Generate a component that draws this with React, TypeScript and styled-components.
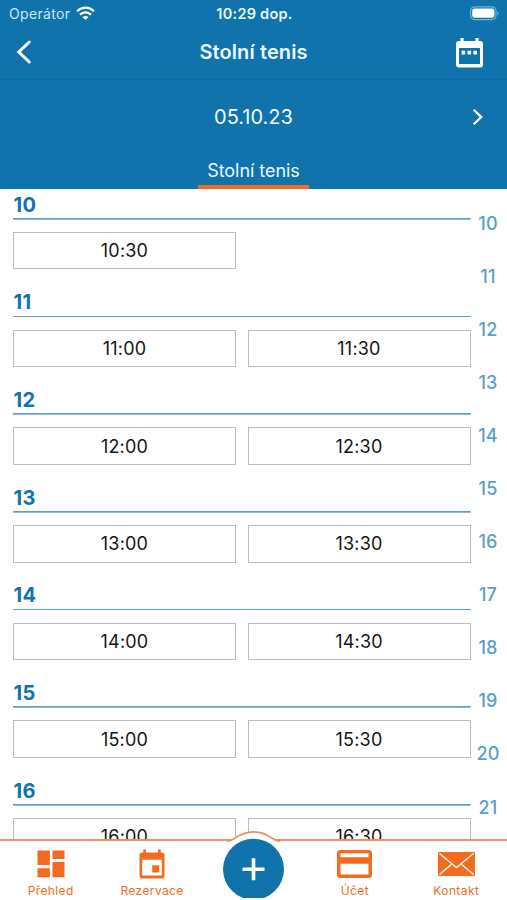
import React from "react";
import styled, { createGlobalStyle } from "styled-components";

const BLUE = "#1173ab";
const ORANGE = "#f36b21";

const GlobalStyle = createGlobalStyle`
  * { box-sizing: border-box; }
  body { margin: 0; background: #fff; font-family: Inter, "Liberation Sans", sans-serif; }
  button { font: inherit; color: inherit; background: none; border: 0; padding: 0; }
  svg { display: block; }
`;

const Screen = styled.div`
  width: 507px;
  height: 900px;
  display: flex;
  flex-direction: column;
  overflow: hidden;
  background: #fff;
`;

const Header = styled.header`
  flex: none;
  height: 189px;
  background: ${BLUE};
  color: #e9faff;
`;

const StatusBar = styled.div`
  height: 27px;
  display: grid;
  grid-template-columns: 1fr auto 1fr;
  align-items: center;
  padding: 0 7px 0 9px;
  font-size: 14px;
`;

const Carrier = styled.div`
  display: flex;
  align-items: center;
  gap: 6px;
  letter-spacing: 0.35px;
  color: #c8e8f8;
`;

const Clock = styled.div`
  font-weight: 600;
  font-size: 14.5px;
  letter-spacing: 0.25px;
`;

const BatterySlot = styled.div`
  display: flex;
  justify-content: flex-end;
`;

const TitleBar = styled.div`
  height: 53px;
  display: grid;
  grid-template-columns: 60px 1fr 60px;
  align-items: center;
  padding-bottom: 2px;
  border-bottom: 1px solid #0d6a9f;
`;

const Title = styled.h1`
  margin: 0;
  text-align: center;
  font-size: 20px;
  line-height: 26px;
  font-weight: 600;
  letter-spacing: 0.1px;
`;

const IconButton = styled.button<{ $inset: number }>`
  width: 60px;
  padding-left: ${(p) => p.$inset}px;
`;

const DateBar = styled.div`
  height: 73px;
  display: grid;
  grid-template-columns: 60px 1fr 60px;
  align-items: center;
  text-align: center;
  font-size: 20px;
`;

const DateText = styled.span`
  grid-column: 2;
  letter-spacing: 0;
`;

const Tabs = styled.nav`
  height: 36px;
  display: flex;
  justify-content: center;
`;

const Tab = styled.button`
  width: 111px;
  padding-top: 3px;
  border-bottom: 4px solid ${ORANGE};
  font-size: 18px;
  letter-spacing: -0.05px;
`;

const Content = styled.main`
  flex: none;
  height: 650px;
  display: flex;
  overflow: hidden;
`;

const Slots = styled.div`
  width: 457.5px;
  margin-left: 13px;
`;

const Section = styled.section`
  height: 97.7px;
`;

const Hour = styled.h2`
  margin: 0;
  height: 30.7px;
  padding-top: 2.5px;
  padding-left: 0.5px;
  background: linear-gradient(#5b9fcc, #5b9fcc) bottom / 100% 1.7px no-repeat;
  color: ${BLUE};
  font-size: 20px;
  line-height: 26px;
  font-weight: 700;
  letter-spacing: 0.3px;
`;

const SlotGrid = styled.div`
  display: grid;
  grid-template-columns: 223px 223px;
  justify-content: space-between;
  padding-top: 12.3px;
`;

const Slot = styled.button`
  height: 37.5px;
  border: 1px solid #bdbdbd;
  color: #151515;
  font-size: 18px;
  letter-spacing: 0.2px;
`;

const HourIndex = styled.aside`
  width: 36px;
  padding-top: 8px;
`;

const IndexItem = styled.div`
  height: 53.05px;
  line-height: 54px;
  text-align: center;
  padding-right: 1px;
  font-size: 18px;
  font-weight: 500;
  letter-spacing: 0.2px;
  color: #5a9fca;
`;

const BottomNav = styled.nav`
  position: relative;
  flex: none;
  height: 61px;
  display: grid;
  grid-template-columns: repeat(5, 101.4px);
  border-top: 2px solid #ee8c62;
  background: #fff;
`;

const NavItem = styled.button`
  display: flex;
  flex-direction: column;
  align-items: center;
  color: ${ORANGE};
  font-size: 12px;
  line-height: 16px;
  letter-spacing: 0.4px;
`;

const NavIcon = styled.span`
  height: 42px;
  display: flex;
  align-items: center;
  padding-top: 3px;
`;

const AddButton = styled.button`
  position: absolute;
  left: 213px;
  top: -12px;
  width: 81px;
  height: 69px;
  overflow: hidden;
`;

const sections = [
  { hour: "10", slots: ["10:30"] },
  ...["11", "12", "13", "14", "15", "16"].map((hour) => ({
    hour,
    slots: [`${hour}:00`, `${hour}:30`],
  })),
];

const hours = Array.from({ length: 12 }, (_, i) => 10 + i);

const WifiIcon = () => (
  <svg width="19" height="15" viewBox="0 0 19 15" fill="none" stroke="#fff" strokeWidth="2.3">
    <path d="M1.1 5.2C6 .4 13 .4 17.9 5.2M4 8.6c3.2-3 7.8-3 11 0" />
    <path d="M6.5 11.3c1.8-1.7 4.2-1.7 6 0L9.5 14z" fill="#fff" stroke="none" />
  </svg>
);

const BatteryIcon = () => (
  <svg width="31" height="15" viewBox="0 0 31 15">
    <rect x="1.6" y=".8" width="25.4" height="12.8" rx="4" fill="none" stroke="#75afd2" strokeWidth="1.2" />
    <rect x="3.2" y="2.6" width="22.2" height="9.2" rx="2.4" fill="#fff" />
    <path d="M28.3 5v4.6q3-2.3 0-4.6" fill="#75afd2" />
  </svg>
);

const BackIcon = () => (
  <svg width="16" height="26" viewBox="0 0 16 26" fill="none" stroke="#fff" strokeWidth="3" strokeLinecap="round">
    <path d="M13.3 3 2.8 13l10.5 10" />
  </svg>
);

const NextIcon = () => (
  <svg width="12" height="18" viewBox="0 0 12 18" fill="none" stroke="#fff" strokeWidth="2.3">
    <path d="m1.7 1.7 7.5 7.3-7.5 7.3" />
  </svg>
);

const DateIcon = () => (
  <svg width="27" height="31" viewBox="0 0 27 31" fill="#fff">
    <path fillRule="evenodd" d="M4.4 1h3.2v3h11.8V1h3.2v3h1.4q3 0 3 3v20.5q0 3-3 3H3q-3 0-3-3V7q0-3 3-3h1.4zM3 11v16h21V11z" />
    <path d="M5.6 13.8h3.6v3.6H5.6zM11.5 13.8h3.6v3.6h-3.6zM17.4 13.8H21v3.6h-3.6z" />
  </svg>
);

const OverviewIcon = () => (
  <svg width="28" height="28" viewBox="0 0 28 28" fill="currentColor">
    <path d="M.5.5h12.4v14.6H.5zM15.5.5h12V9h-12zM.5 18.2h12.4v9.1H.5zM15.5 12h12v15.3h-12z" />
  </svg>
);

const ReservationIcon = () => (
  <svg width="26" height="30" viewBox="0 0 26 30" fill="currentColor">
    <path fillRule="evenodd" d="M4.3.5h2.8v3h11.8v-3h2.8v3h.8q3 0 3 3v20q0 3-3 3h-19q-3 0-3-3v-20q0-3 3-3h.8zM3.2 10.7v15.8h19.6V10.7z" />
    <path d="M13.2 16.3h7v7.2h-7z" />
  </svg>
);

const CardIcon = () => (
  <svg width="35" height="28" viewBox="0 0 35 28">
    <path fill="currentColor" fillRule="evenodd" d="M3.5 0h28Q35 0 35 3.5v21q0 3.5-3.5 3.5h-28Q0 28 0 24.5v-21Q0 0 3.5 0M3.5 3.3v4h28v-4zM3.5 13.8v10.8h28V13.8z" />
  </svg>
);

const MailIcon = () => (
  <svg width="37" height="24" viewBox="0 0 37 24">
    <rect width="37" height="24" rx="1" fill="currentColor" />
    <path d="m1.5 1.5 17 14 17-14M1.5 22.5 14 11.8M35.5 22.5 23 11.8" fill="none" stroke="#ffeee3" strokeWidth="1.6" />
  </svg>
);

const AddIcon = () => (
  <svg width="81" height="69" viewBox="0 0 81 69">
    <path d="M14 12Q18 12 21 9.8Q40.5-4 60 9.8Q63 12 67 12V20H14z" fill="#fff" />
    <path d="M14 12Q18 12 21 9.8Q40.5-4 60 9.8Q63 12 67 12" fill="none" stroke="#ee8c62" strokeWidth="1.8" />
    <circle cx="40.5" cy="40.3" r="30.5" fill={BLUE} />
    <path d="M29.5 40.3h22M40.5 29.3v22" stroke="#fff" strokeWidth="3.6" />
  </svg>
);

export default function App() {
  return (
    <>
      <GlobalStyle />
      <Screen>
        <Header>
          <StatusBar>
            <Carrier>Operátor <WifiIcon /></Carrier>
            <Clock>10:29 dop.</Clock>
            <BatterySlot><BatteryIcon /></BatterySlot>
          </StatusBar>
          <TitleBar>
            <IconButton $inset={16}><BackIcon /></IconButton>
            <Title>Stolní tenis</Title>
            <IconButton $inset={9}><DateIcon /></IconButton>
          </TitleBar>
          <DateBar>
            <DateText>05.10.23</DateText>
            <IconButton $inset={25}><NextIcon /></IconButton>
          </DateBar>
          <Tabs><Tab>Stolní tenis</Tab></Tabs>
        </Header>
        <Content>
          <Slots>
            {sections.map(({ hour, slots }) => (
              <Section key={hour}>
                <Hour>{hour}</Hour>
                <SlotGrid>
                  {slots.map((time) => <Slot key={time}>{time}</Slot>)}
                </SlotGrid>
              </Section>
            ))}
          </Slots>
          <HourIndex>
            {hours.map((hour) => <IndexItem key={hour}>{hour}</IndexItem>)}
          </HourIndex>
        </Content>
        <BottomNav>
          <NavItem><NavIcon><OverviewIcon /></NavIcon>Přehled</NavItem>
          <NavItem><NavIcon><ReservationIcon /></NavIcon>Rezervace</NavItem>
          <span />
          <NavItem><NavIcon><CardIcon /></NavIcon>Účet</NavItem>
          <NavItem><NavIcon><MailIcon /></NavIcon>Kontakt</NavItem>
          <AddButton aria-label="+"><AddIcon /></AddButton>
        </BottomNav>
      </Screen>
    </>
  );
}
